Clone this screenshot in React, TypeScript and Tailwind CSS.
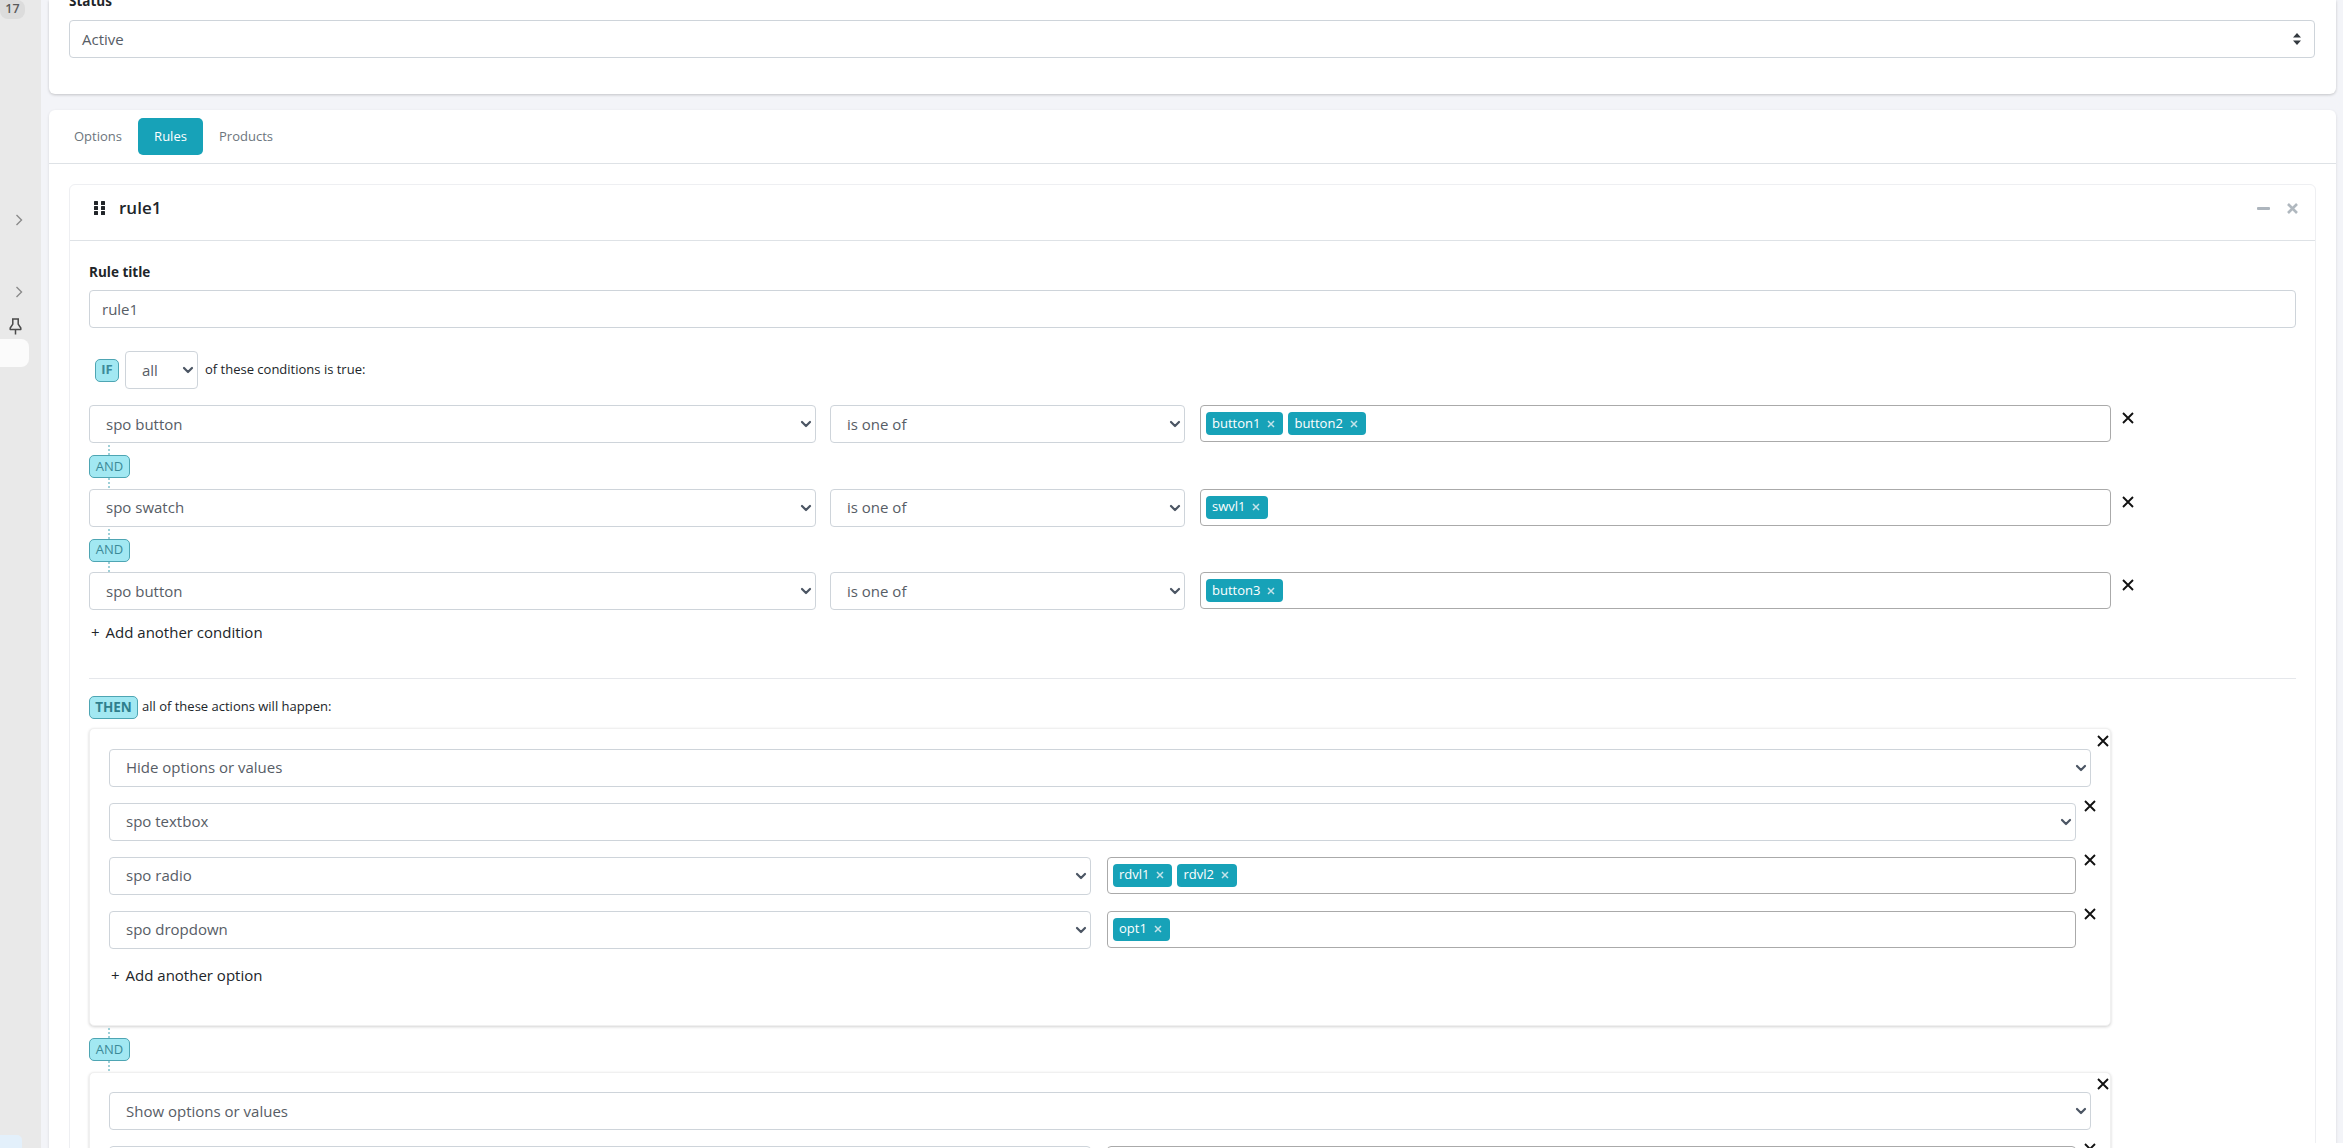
import React from "react";

const font = "font-['Open_Sans','Noto_Sans',sans-serif]";

function Chevron() {
  return (
    <svg viewBox="0 0 16 16" className="w-[18px] h-[16px] shrink-0" fill="none" stroke="#4b5563" strokeWidth="2.2" strokeLinecap="round" strokeLinejoin="round">
      <path d="M4 6l4 4 4-4" />
    </svg>
  );
}

function Sel({ label, className = "" }: { label: string; className?: string }) {
  return (
    <div className={`h-[38px] bg-white border border-[#ced4da] rounded-[4px] flex items-center justify-between pl-[16px] pr-0 text-[15px] text-[#575d66] ${className}`}>
      <span>{label}</span>
      <Chevron />
    </div>
  );
}

function X({ size = 12 }: { size?: number }) {
  return (
    <svg width={size} height={size} viewBox="0 0 12 12" fill="none" stroke="#111" strokeWidth="1.9" className="shrink-0">
      <path d="M1 1l10 10M11 1L1 11" />
    </svg>
  );
}

function Tag({ label }: { label: string }) {
  return (
    <span className="h-[23px] bg-[#17a2b8] rounded-[4px] text-white text-[13px] flex items-center pl-[6px] pr-[8px] gap-[7px]">
      {label}
      <svg width="8" height="8" viewBox="0 0 8 8" fill="none" stroke="#c3e3e9" strokeWidth="1.5"><path d="M1 1l6 6M7 1L1 7" /></svg>
    </span>
  );
}

function TagBox({ tags, className = "" }: { tags: string[]; className?: string }) {
  return (
    <div className={`h-[37px] bg-white border border-[#aaaaaa] rounded-[4px] flex items-center gap-[5px] pl-[5px] ${className}`}>
      {tags.map((t) => <Tag key={t} label={t} />)}
    </div>
  );
}

function And() {
  return (
    <div className="h-[45.5px] flex flex-col items-start">
      <div className="ml-[19px] w-[2px] h-[10px] mt-[2px] border-l-2 border-dotted border-[#9ed0d8]" />
      <div className="w-[41px] h-[23px] shrink-0 bg-[#a2e8f2] border border-[#4ea5b3] rounded-[5px] text-[#3c8a98] text-[13px] flex items-center justify-center">AND</div>
      <div className="ml-[19px] w-[2px] h-[10px] border-l-2 border-dotted border-[#9ed0d8]" />
    </div>
  );
}

function CondRow({ a, tags }: { a: string; tags: string[] }) {
  return (
    <div className="flex items-start">
      <Sel label={a} className="w-[727px]" />
      <Sel label="is one of" className="w-[355px] ml-[14px]" />
      <TagBox tags={tags} className="w-[911px] ml-[15px]" />
      <div className="ml-[11px] mt-[7px]"><X /></div>
    </div>
  );
}

function ActionRow({ a, tags }: { a: string; tags: string[] }) {
  return (
    <div className="flex items-start mb-[16px]">
      <Sel label={a} className="w-[982px]" />
      <TagBox tags={tags} className="w-[969px] ml-[16px]" />
      <div className="ml-[8px] mt-[-3px]"><X /></div>
    </div>
  );
}

function ActionCard({ title, children, className = "" }: { title: string; children?: React.ReactNode; className?: string }) {
  return (
    <div className={`w-[2022px] bg-white border border-[#f0f0f0] rounded-[5px] shadow-[0_1px_3px_rgba(0,0,0,0.18)] pl-[19px] pt-[19.5px] ${className}`}>
      <div className="flex items-start mb-[16px]">
        <Sel label={title} className="w-[1982px]" />
        <div className="ml-[6px] mt-[-14px]"><X /></div>
      </div>
      {children}
    </div>
  );
}

export default function App() {
  return (
    <div className={`h-screen overflow-hidden bg-[#f3f4f8] flex text-[#212529] relative ${font}`}>
      <aside className="w-[41px] shrink-0 bg-[#e9e9e9] flex flex-col items-start relative">
        <div className="w-[25px] h-[19px] bg-[#dcdcdc] rounded-r-[8px] rounded-bl-[8px] text-[12.5px] text-[#5a5a5a] font-semibold flex items-center justify-center">17</div>
        <svg className="ml-[15px] mt-[194px]" width="8" height="14" viewBox="0 0 8 14" fill="none" stroke="#8a8a8a" strokeWidth="1.4"><path d="M1.5 2l5 5-5 5" /></svg>
        <svg className="ml-[15px] mt-[58px]" width="8" height="14" viewBox="0 0 8 14" fill="none" stroke="#8a8a8a" strokeWidth="1.4"><path d="M1.5 2l5 5-5 5" /></svg>
        <svg className="ml-[9px] mt-[19px]" width="13" height="17" viewBox="0 0 13 17" fill="none" stroke="#4a4a4a" strokeWidth="1.5" strokeLinejoin="round"><path d="M3 1h7M3.8 1v5.2L1.2 10v1.6h10.6V10L9.2 6.2V1M6.5 11.6V16.5" /></svg>
        <div className="w-[29px] h-[28px] bg-[#fbfbfb] rounded-r-[8px] mt-[4px]" />
        <div className="absolute left-0 bottom-0 w-[22px] h-[13px] bg-[#e3f0fb] rounded-tr-[5px]" />
      </aside>

      <main className="w-[2287px] ml-[8px] shrink-0">
        <section className="h-[94px] bg-white rounded-b-[6px] shadow-[0_1px_3px_rgba(0,0,0,0.2)] pl-[20px] pr-[21px]">
          <div className="h-[20px] flex items-end">
            <span className="text-[13.5px] font-bold leading-[20px] mb-[9px] text-[#212529]">Status</span>
          </div>
          <div className="h-[38px] border border-[#ced4da] rounded-[4px] flex items-center justify-between pl-[12px] pr-[12px] text-[15px] text-[#575d66]">
            <span>Active</span>
            <svg width="10" height="12" viewBox="0 0 10 12" fill="#343a40"><path d="M5 0l4 4.5H1zM5 12L1 7.5h8z" /></svg>
          </div>
        </section>

        <section className="mt-[16px] bg-white rounded-t-[6px] shadow-[0_1px_3px_rgba(0,0,0,0.12)]">
          <div className="h-[54px] border-b border-[#dee2e6] pt-[8px] pl-[16px] flex items-start text-[13px] text-[#6c757d]">
            <div className="w-[73px] h-[37px] pr-[7px] flex items-center justify-center">Options</div>
            <div className="w-[65px] h-[37px] bg-[#17a2b8] text-white rounded-[5px] flex items-center justify-center">Rules</div>
            <div className="w-[86px] h-[37px] flex items-center justify-center">Products</div>
          </div>

          <div className="pt-[20px] pl-[20px]">
            <div className="w-[2247px] bg-white border border-[#eeeff2] rounded-[6px] pb-[400px]">
              <div className="h-[56px] border-b border-[#dee2e6] flex items-center pb-[9px] pl-[24px] pr-[17px]">
                <svg width="11" height="14" viewBox="0 0 11 14" fill="#212529"><rect width="4" height="4" rx="0.5" /><rect x="7" width="4" height="4" rx="0.5" /><rect y="5" width="4" height="4" rx="0.5" /><rect x="7" y="5" width="4" height="4" rx="0.5" /><rect y="10" width="4" height="4" rx="0.5" /><rect x="7" y="10" width="4" height="4" rx="0.5" /></svg>
                <span className="ml-[14px] text-[17px] font-semibold text-[#212529]">rule1</span>
                <div className="ml-auto flex items-center gap-[17px]">
                  <div className="w-[13px] h-[3px] bg-[#adb5bd] rounded-[1px]" />
                  <svg width="11" height="11" viewBox="0 0 11 11" fill="none" stroke="#b0b8bf" strokeWidth="2.6"><path d="M1 1l9 9M10 1l-9 9" /></svg>
                </div>
              </div>

              <div className="pl-[19px] pr-[19px]">
                <div className="pt-[21px] h-[49px] text-[13.5px] font-bold text-[#212529] leading-[20px]">Rule title</div>
                <div className="h-[38px] border border-[#ced4da] rounded-[4px] flex items-center pl-[12px] text-[15px] text-[#575d66]">rule1</div>

                <div className="mt-[23px] flex items-center h-[38px]">
                  <div className="ml-[6px] w-[24px] h-[23px] bg-[#a2e8f2] border border-[#4ea5b3] rounded-[5px] text-[#3c8a98] text-[13px] font-bold flex items-center justify-center">IF</div>
                  <div className="ml-[6px] w-[73px] h-[38px] border border-[#ced4da] rounded-[4px] flex items-center justify-between pl-[16px] pr-0 text-[15px] text-[#575d66]">
                    <span>all</span>
                    <Chevron />
                  </div>
                  <span className="ml-[7px] text-[13px] text-[#212529]">of these conditions is true:</span>
                </div>

                <div className="mt-[16px]">
                  <CondRow a="spo button" tags={["button1", "button2"]} />
                  <And />
                  <CondRow a="spo swatch" tags={["swvl1"]} />
                  <And />
                  <CondRow a="spo button" tags={["button3"]} />
                </div>

                <div className="mt-[11px] h-[22px] flex items-center gap-[6px] text-[15px] text-[#212529]"><span className="ml-[2px]">+</span><span>Add another condition</span></div>

                <div className="mt-[35px] border-t border-[#e5e7eb]" />

                <div className="mt-[16px] flex items-center h-[24px]">
                  <div className="w-[49px] h-[23px] bg-[#a2e8f2] border border-[#4ea5b3] rounded-[5px] text-[#2f7f8d] text-[13.5px] font-bold flex items-center justify-center">THEN</div>
                  <span className="ml-[4px] text-[13px] text-[#212529]">all of these actions will happen:</span>
                </div>

                <div className="mt-[9px]">
                  <ActionCard title="Hide options or values" className="h-[298px]">
                    <div className="flex items-start mb-[16px]">
                      <Sel label="spo textbox" className="w-[1967px]" />
                      <div className="ml-[8px] mt-[-3px]"><X /></div>
                    </div>
                    <ActionRow a="spo radio" tags={["rdvl1", "rdvl2"]} />
                    <ActionRow a="spo dropdown" tags={["opt1"]} />
                    <div className="ml-[2px] mt-[2px] h-[22px] flex items-center gap-[6px] text-[15px] text-[#212529]"><span>+</span><span>Add another option</span></div>
                  </ActionCard>
                  <And />
                  <ActionCard title="Show options or values">
                    <ActionRow a="spo radio" tags={["rdvl1"]} />
                  </ActionCard>
                </div>
              </div>
            </div>
          </div>
        </section>
      </main>
      <div className="absolute right-0 bottom-0 w-[35px] h-[5px] bg-white" />
    </div>
  );
}
